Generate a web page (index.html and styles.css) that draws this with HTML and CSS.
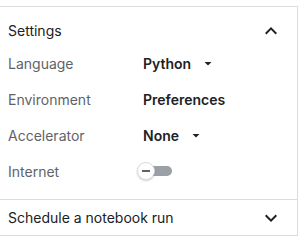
FILE: index.html
```html
<!DOCTYPE html>
<html lang="en">
<head>
<meta charset="UTF-8">
<meta name="viewport" content="width=device-width, initial-scale=1.0">
<title>Settings</title>
<link rel="stylesheet" href="styles.css">
</head>
<body>
<div class="panel">
    <div class="section-header">
        <span>Settings</span>
        <svg class="chevron" width="24" height="24" viewBox="0 0 24 24"><path d="M12 8l-6 6 1.41 1.41L12 10.83l4.59 4.58L18 14z"/></svg>
    </div>
    <div class="settings-body">
        <div class="row">
            <span class="label">Language</span>
            <span class="value">Python<svg class="drop" width="10" height="10" viewBox="0 0 10 10"><polygon points="1.5,3 8.5,3 5,6.5"/></svg></span>
        </div>
        <div class="row">
            <span class="label">Environment</span>
            <span class="value">Preferences</span>
        </div>
        <div class="row">
            <span class="label">Accelerator</span>
            <span class="value">None<svg class="drop" width="10" height="10" viewBox="0 0 10 10"><polygon points="1.5,3 8.5,3 5,6.5"/></svg></span>
        </div>
        <div class="row">
            <span class="label">Internet</span>
            <span class="value">
                <span class="toggle">
                    <span class="track"></span>
                    <span class="thumb"><span class="dash"></span></span>
                </span>
            </span>
        </div>
    </div>
    <div class="section-header collapsed">
        <span>Schedule a notebook run</span>
        <svg class="chevron" width="24" height="24" viewBox="0 0 24 24"><path d="M16.59 8.59L12 13.17 7.41 8.59 6 10l6 6 6-6z"/></svg>
    </div>
</div>
</body>
</html>
```
FILE: styles.css
```css
body {
    font-family: Inter, "Noto Sans", sans-serif;
    font-size: 14px;
    color: #202124;
    background-color: #fff;
    margin: 0;
    padding: 6px 0 0 0;
}
.panel {
    width: 298px;
    box-sizing: border-box;
    border-top: 1px solid #dadce0;
    border-right: 1px solid #dadce0;
}
.section-header {
    display: flex;
    justify-content: space-between;
    align-items: center;
    height: 24px;
    line-height: 20px;
    padding: 12px 14px 3px 8px;
}
.section-header.collapsed {
    height: 35px;
    padding: 0 14px 0 8px;
    border-bottom: 1px solid #dadce0;
}
.chevron {
    fill: #202124;
}
.settings-body {
    padding: 0 8px 9px 8px;
    border-bottom: 1px solid #dadce0;
}
.row {
    display: flex;
    align-items: center;
    height: 36px;
    line-height: 20px;
}
.label {
    width: 135px;
    color: #5f6368;
}
.value {
    display: flex;
    align-items: center;
    font-weight: 600;
    color: #202124;
}
.drop {
    margin-left: 12px;
    fill: #202124;
}
.toggle {
    position: relative;
    display: block;
    width: 36px;
    height: 18px;
    margin-left: -6px;
    margin-top: -3px;
}
.track {
    position: absolute;
    left: 6px;
    top: 4px;
    width: 29px;
    height: 10px;
    border-radius: 5px;
    background-color: #9aa0a6;
}
.thumb {
    position: absolute;
    left: 0;
    top: 0;
    width: 16px;
    height: 16px;
    border-radius: 50%;
    background-color: #fff;
    border: 1px solid #dadce0;
    box-shadow: 0 1px 2px rgba(0, 0, 0, 0.2);
    display: flex;
    align-items: center;
    justify-content: center;
}
.dash {
    display: block;
    width: 8px;
    height: 2px;
    background-color: #5f6368;
}
```
